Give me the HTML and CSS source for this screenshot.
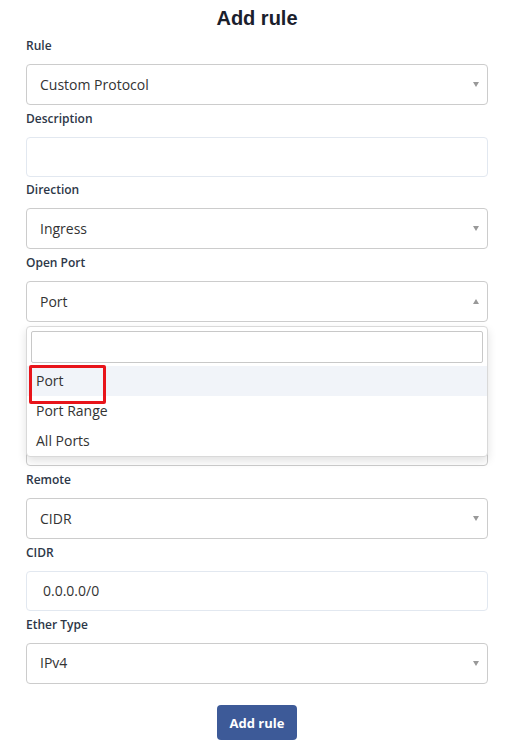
FILE: index.html
```html
<!DOCTYPE html>
<html>
<head>
<meta charset="utf-8">
<link rel="stylesheet" href="styles.css">
</head>
<body>
<div class="page">
  <h1 class="title">Add rule</h1>

  <div class="field">
    <label class="label">Rule</label>
    <div class="select"><span class="value">Custom Protocol</span><span class="arrow down"></span></div>
  </div>

  <div class="field">
    <label class="label">Description</label>
    <div class="input"></div>
  </div>

  <div class="field">
    <label class="label">Direction</label>
    <div class="select"><span class="value">Ingress</span><span class="arrow down"></span></div>
  </div>

  <div class="field open">
    <label class="label">Open Port</label>
    <div class="select"><span class="value">Port</span><span class="arrow up"></span></div>
    <div class="dropdown">
      <div class="search"></div>
      <ul class="options">
        <li class="option active"><span class="mark">Port</span></li>
        <li class="option">Port Range</li>
        <li class="option">All Ports</li>
      </ul>
    </div>
  </div>

  <div class="field covered">
    <label class="label">Port</label>
    <div class="input"></div>
  </div>

  <div class="field covered">
    <label class="label">Protocol</label>
    <div class="select"><span class="value"></span><span class="arrow down"></span></div>
  </div>

  <div class="field">
    <label class="label">Remote</label>
    <div class="select"><span class="value">CIDR</span><span class="arrow down"></span></div>
  </div>

  <div class="field">
    <label class="label">CIDR</label>
    <div class="input"><span class="value in">0.0.0.0/0</span></div>
  </div>

  <div class="field">
    <label class="label">Ether Type</label>
    <div class="select"><span class="value">IPv4</span><span class="arrow down"></span></div>
  </div>

  <div class="actions">
    <button class="btn">Add rule</button>
  </div>
</div>
</body>
</html>
```

FILE: styles.css
```css
* { box-sizing: border-box; }
html, body { margin: 0; padding: 0; background: #fff; }
body { font-family: "Open Sans", "Liberation Sans", sans-serif; color: #2d3748; }

.page {
  width: 462px;
  margin: 0 0 0 26px;
}

.title {
  margin: 0 0 5px;
  padding-top: 4px;
  font-family: "Liberation Sans", Arial, sans-serif;
  font-size: 20px;
  line-height: 28px;
  font-weight: 700;
  text-align: center;
  color: #1a202c;
}

.field {
  position: relative;
  margin-bottom: 4.7px;
}

.label {
  display: block;
  font-size: 12px;
  font-weight: 600;
  line-height: 18px;
  margin-bottom: 9px;
  color: #2d3748;
}

.covered .label { visibility: hidden; }

.select, .input {
  height: 41px;
  border-radius: 4px;
  display: flex;
  align-items: center;
  justify-content: space-between;
  padding: 0 8px 0 13px;
  background: #fff;
}

.select { border: 1px solid #cccccc; }
.input { border: 1px solid #e2e8f0; height: 40px; margin-bottom: 1px; }

.value {
  font-size: 14px;
  color: #333;
  line-height: 20px;
}
.value.in { padding-left: 3px; }

.arrow {
  width: 0;
  height: 0;
  border-left: 3px solid transparent;
  border-right: 3px solid transparent;
}
.arrow.down { border-top: 5px solid #999; }
.arrow.up { border-bottom: 5px solid #999; }

.dropdown {
  position: absolute;
  left: 0;
  right: 0;
  top: calc(100% + 4px);
  background: #fff;
  border: 1px solid #d9d9d9;
  border-radius: 4px;
  box-shadow: 0 4px 10px rgba(0, 0, 0, 0.12);
  z-index: 10;
  padding-top: 4px;
}

.search {
  height: 32px;
  margin: 0 4px 3px;
  border: 1px solid #c8c8c8;
  border-radius: 2px;
}

.options {
  list-style: none;
  margin: 0;
  padding: 0;
}

.option {
  height: 30px;
  line-height: 30px;
  padding-left: 9px;
  font-size: 14px;
  color: #333;
}
.option.active { background: #f1f4f9; }
.option:last-child { border-radius: 0 0 4px 4px; }

.mark {
  display: inline-block;
  position: relative;
}
.mark::after {
  content: "";
  position: absolute;
  left: -7px;
  top: -1px;
  width: 71px;
  height: 33px;
  border: 3px solid #e8141a;
  border-radius: 2px;
}

.actions {
  display: flex;
  justify-content: center;
  padding-top: 17px;
}

.btn {
  width: 80px;
  height: 35px;
  border: none;
  border-radius: 4px;
  background: #3d5a98;
  color: #fff;
  font-family: "Open Sans", "Liberation Sans", sans-serif;
  font-size: 13px;
  font-weight: 700;
}
```
